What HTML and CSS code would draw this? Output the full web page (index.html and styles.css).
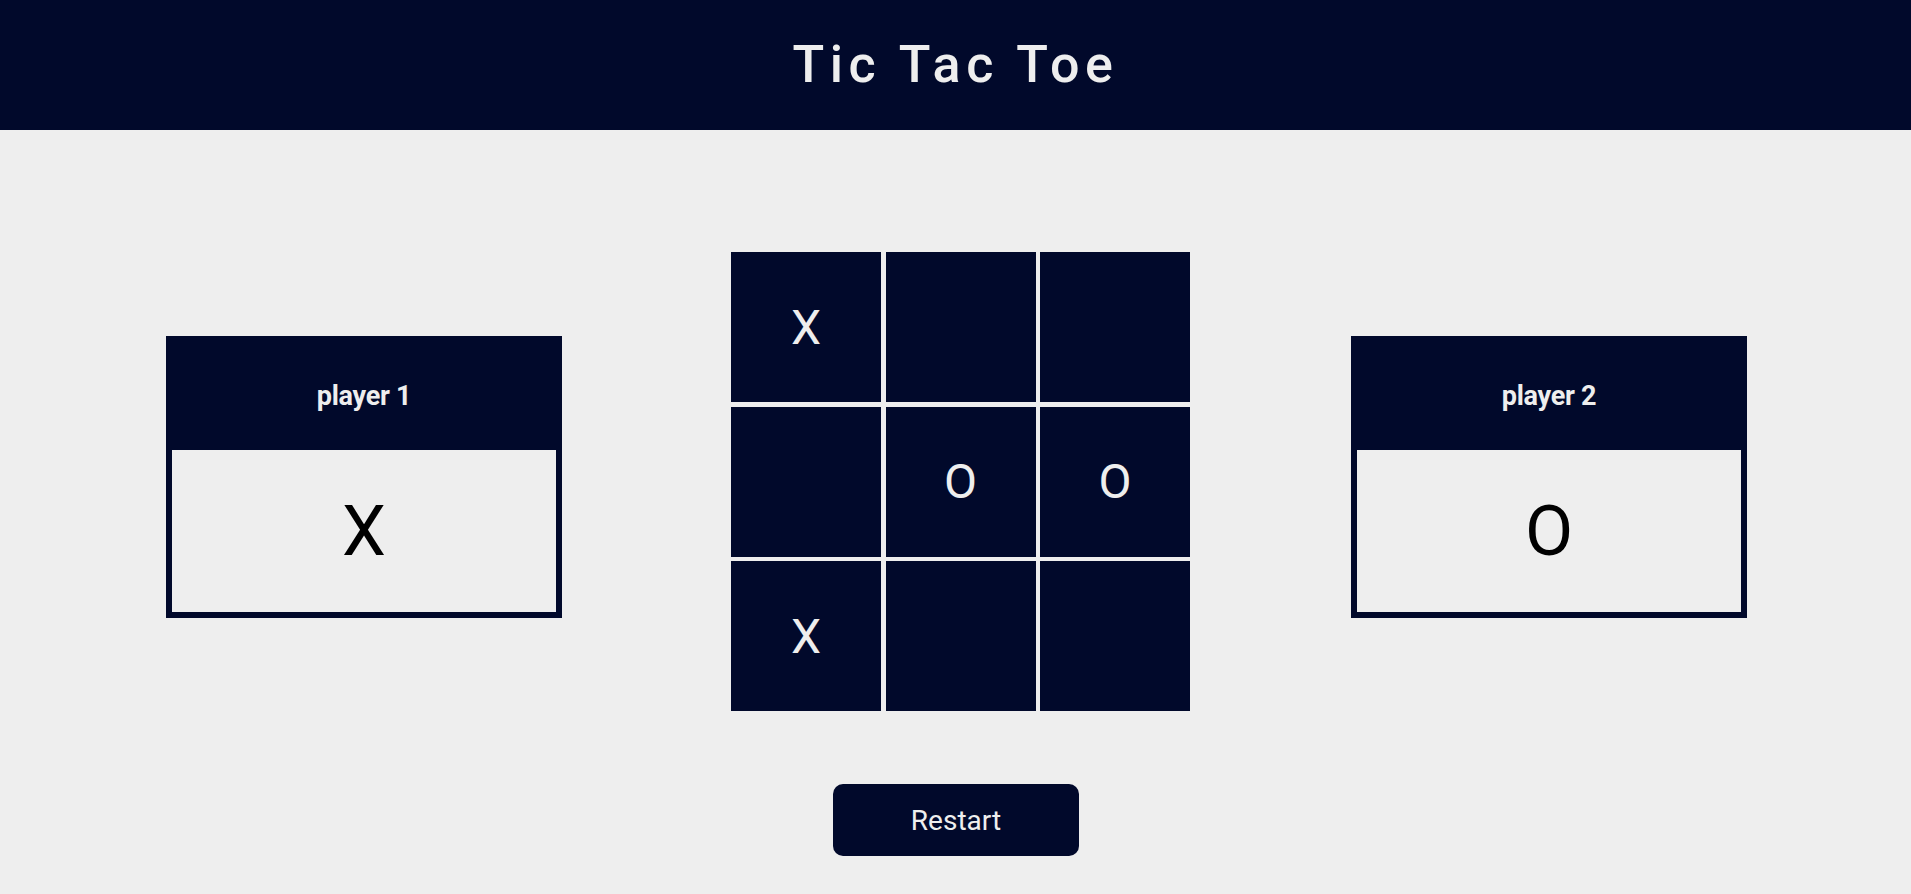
FILE: index.html
```html
<!DOCTYPE html>
<html lang="en">
<head>
<meta charset="utf-8">
<title>Tic Tac Toe</title>
<link rel="stylesheet" href="styles.css">
</head>
<body>
<header class="topbar">
  <h1 class="title">Tic Tac Toe</h1>
</header>
<main class="game">
  <section class="arena">
    <div class="player">
      <h2 class="player-name">player 1</h2>
      <div class="player-mark">X</div>
    </div>
    <div class="board">
      <div class="cell">X</div>
      <div class="cell"></div>
      <div class="cell"></div>
      <div class="cell"></div>
      <div class="cell">O</div>
      <div class="cell">O</div>
      <div class="cell">X</div>
      <div class="cell"></div>
      <div class="cell"></div>
    </div>
    <div class="player">
      <h2 class="player-name">player 2</h2>
      <div class="player-mark">O</div>
    </div>
  </section>
  <button class="restart" type="button">Restart</button>
</main>
</body>
</html>
```
FILE: styles.css
```css
* {
  box-sizing: border-box;
}

html, body {
  margin: 0;
  padding: 0;
}

body {
  background: #eeeeee;
  font-family: Roboto, "Liberation Sans", sans-serif;
  height: 894px;
  overflow: hidden;
}

.topbar {
  height: 130px;
  background: #01092b;
  display: flex;
  align-items: center;
  justify-content: center;
}

.title {
  margin: 0;
  color: #eeeeee;
  font-size: 52px;
  font-weight: 500;
  letter-spacing: 5.6px;
  line-height: 1;
}

.game {
  display: flex;
  flex-direction: column;
  align-items: center;
  padding-top: 113px;
}

.arena {
  width: 100%;
  display: flex;
  align-items: center;
  justify-content: space-between;
  padding: 0 164px 0 166px;
}

.player {
  width: 396px;
  background: #01092b;
  padding: 0 6px 6px;
  display: flex;
  flex-direction: column;
}

.player-name {
  margin: 0;
  height: 114px;
  display: flex;
  align-items: center;
  justify-content: center;
  color: #eeeeee;
  font-size: 27px;
  font-weight: 700;
  letter-spacing: -0.3px;
  padding-top: 6px;
}

.player-mark {
  height: 162px;
  background: #eeeeee;
  display: flex;
  align-items: center;
  justify-content: center;
  color: #000000;
  font-size: 70px;
  font-weight: 400;
}

.board {
  margin: 9px 0 0 8px;
  display: grid;
  grid-template-columns: repeat(3, 150px);
  grid-template-rows: repeat(3, 150px);
  gap: 4.5px;
}

.cell {
  background: #01092b;
  color: #eeeeee;
  font-size: 48px;
  display: flex;
  align-items: center;
  justify-content: center;
}

.restart {
  margin-top: 73px;
  width: 246px;
  height: 72px;
  border: none;
  border-radius: 10px;
  background: #01092b;
  color: #eeeeee;
  font-family: Roboto, "Liberation Sans", sans-serif;
  font-size: 28px;
  font-weight: 400;
  margin-left: 1px;
}
```
